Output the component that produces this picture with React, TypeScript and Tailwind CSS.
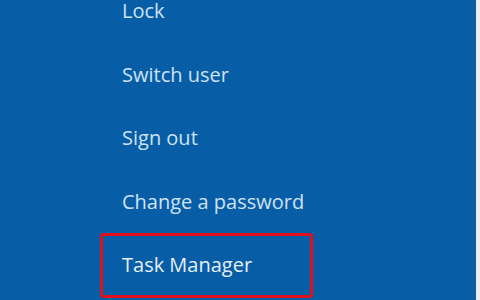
const items = ["Lock", "Switch user", "Sign out", "Change a password"];

export default function App() {
  return (
    <div className="flex h-[300px] w-[480px] overflow-hidden bg-[#e9eef3]" style={{ fontFamily: '"Open Sans", "Noto Sans", sans-serif' }}>
      <div className="h-full w-[476px] bg-[#075ea6]">
        <ul className="flex flex-col pl-[100px]">
          {items.map((label, i) => (
            <li
              key={label}
              className={`pl-[22px] text-[20px] leading-[22px] text-[#cfe2f3] ${i === items.length - 1 ? "mb-[20px]" : "mb-[41.5px]"}`}
            >
              {label}
            </li>
          ))}
          <li className="flex h-[65px] w-[213px] items-center rounded-[4px] border-[3px] border-[#e0101c] pl-[19px] text-[20px] leading-[22px] text-[#e4eff9]">
            Task Manager
          </li>
        </ul>
      </div>
    </div>
  );
}
